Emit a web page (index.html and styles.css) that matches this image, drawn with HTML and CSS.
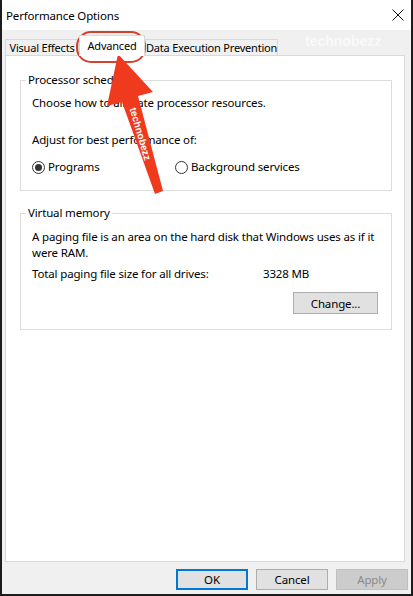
FILE: index.html
```html
<!DOCTYPE html>
<html lang="en">
<head>
  <meta charset="UTF-8" />
  <title>Performance Options</title>
  <link rel="stylesheet" href="styles.css">
</head>
<body>
  <div class="window">
    <div class="titlebar">
      <span class="title">Performance Options</span>
      <svg class="close" width="12" height="12" viewBox="0 0 12 12">
        <path d="M0.5 0.5 L11.5 11.5 M11.5 0.5 L0.5 11.5" stroke="#111" stroke-width="1" fill="none"/>
      </svg>
    </div>

    <div class="tabs">
      <div class="tab tab-visual">Visual Effects</div>
      <div class="tab tab-adv active">Advanced</div>
      <div class="tab tab-dep">Data Execution Prevention</div>
    </div>

    <div class="panel">
      <fieldset class="group group-cpu">
        <legend>Processor scheduling</legend>
        <p class="line">Choose how to allocate processor resources.</p>
        <p class="line adjust">Adjust for best performance of:</p>
        <div class="radios">
          <label class="radio first"><span class="dot checked"></span>Programs</label>
          <label class="radio"><span class="dot"></span>Background services</label>
        </div>
      </fieldset>

      <fieldset class="group group-vm">
        <legend>Virtual memory</legend>
        <p class="line">A paging file is an area on the hard disk that Windows uses as if it were RAM.</p>
        <div class="total">
          <span class="total-label">Total paging file size for all drives:</span>
          <span>3328 MB</span>
        </div>
        <div class="change-row">
          <button class="btn change">Change...</button>
        </div>
      </fieldset>
    </div>

    <div class="footer">
      <button class="btn ok">OK</button>
      <button class="btn">Cancel</button>
      <button class="btn disabled">Apply</button>
    </div>
  </div>

  <!-- annotation layer drawn over the dialog -->
  <svg class="overlay" width="413" height="596" viewBox="0 0 413 596">
    <text class="wm" x="305" y="46">technobezz</text>
    <rect x="77" y="32" width="68" height="30" rx="14" fill="none" stroke="#d3412f" stroke-width="2"/>
    <polygon fill="#f03a1e" points="118,54 153,92 138,96 163,191 155,194 122,102 107,106"/>
    <text class="arrow-text" x="140" y="137" transform="rotate(74 140 134)">technobezz</text>
  </svg>
</body>
</html>
```

FILE: styles.css
```css
body {
  margin: 0;
  position: relative;
  background: #fff;
}
.window {
  width: 413px;
  height: 596px;
  box-sizing: border-box;
  border: 2px solid #1c1c1c;
  border-top: none;
  background: #f0f0f0;
  display: flex;
  flex-direction: column;
  font-family: "Noto Sans", sans-serif;
  font-size: 11.5px;
  letter-spacing: -0.15px;
  color: #000;
}
.titlebar {
  height: 30px;
  flex: none;
  background: #fff;
  display: flex;
  align-items: center;
  justify-content: space-between;
  padding: 0 7px 0 4px;
}
.title {
  font-size: 11.5px;
}
.close {
  display: block;
}
.tabs {
  height: 25px;
  flex: none;
  display: flex;
  align-items: flex-end;
  padding-left: 3px;
}
.tab {
  height: 16px;
  line-height: 15px;
  box-sizing: border-box;
  border: 1px solid #d9d9d9;
  border-bottom: none;
  background: #f0f0f0;
  font-size: 11px;
  letter-spacing: -0.2px;
  text-align: center;
  white-space: nowrap;
}
.tab-visual { width: 74px; }
.tab-adv { width: 66px; }
.tab-dep { width: 133px; }
.tab.active {
  height: 21px;
  line-height: 20px;
  background: #fff;
  margin-bottom: -1px;
  position: relative;
  z-index: 1;
}
.panel {
  flex: none;
  height: 507px;
  box-sizing: border-box;
  margin: 0 6px 0 3px;
  border: 1px solid #d9d9d9;
  background: #fff;
  padding: 16px 12px 0 14px;
}
.group {
  margin: 0;
  border: 1px solid #dcdcdc;
  padding: 7px 11px 15px;
}
.group legend {
  margin-left: -6px;
  padding: 0 2px;
  line-height: 16px;
}
.group-vm {
  margin-top: 14px;
  padding-top: 8px;
  padding-bottom: 15px;
}
.line {
  margin: 0;
  line-height: 16px;
}
.adjust {
  margin-top: 21px;
}
.radios {
  display: flex;
  margin-top: 11px;
  line-height: 16px;
}
.radio {
  display: flex;
  align-items: center;
  gap: 3px;
}
.radio.first {
  width: 143px;
}
.dot {
  width: 13px;
  height: 13px;
  box-sizing: border-box;
  border: 1px solid #333;
  border-radius: 50%;
  display: flex;
  align-items: center;
  justify-content: center;
}
.dot.checked::after {
  content: "";
  width: 7px;
  height: 7px;
  border-radius: 50%;
  background: #333;
}
.total {
  display: flex;
  margin-top: 5px;
  line-height: 16px;
}
.total-label {
  width: 231px;
}
.change-row {
  display: flex;
  justify-content: flex-end;
  margin-top: 10px;
  padding-right: 2px;
}
.btn {
  font-family: "Noto Sans", sans-serif;
  font-size: 11.5px;
  letter-spacing: -0.15px;
  color: #000;
  background: #e1e1e1;
  border: 1px solid #adadad;
  height: 21px;
  width: 72px;
  padding: 0;
}
.btn.change {
  width: 85px;
  height: 22px;
}
.btn.ok {
  border: 2px solid #0078d7;
}
.btn.disabled {
  background: #cccccc;
  border-color: #bfbfbf;
  color: #8a8a8a;
}
.footer {
  display: flex;
  justify-content: flex-end;
  gap: 8px;
  padding: 7px 3px 0 0;
}
.overlay {
  position: absolute;
  left: 0;
  top: 0;
  pointer-events: none;
}
.wm {
  font-family: "Liberation Sans", sans-serif;
  font-weight: bold;
  font-size: 14px;
  fill: #f9f9f9;
}
.arrow-text {
  font-family: "Liberation Sans", sans-serif;
  font-weight: bold;
  font-size: 10px;
  fill: #fff;
  text-anchor: middle;
}
```
